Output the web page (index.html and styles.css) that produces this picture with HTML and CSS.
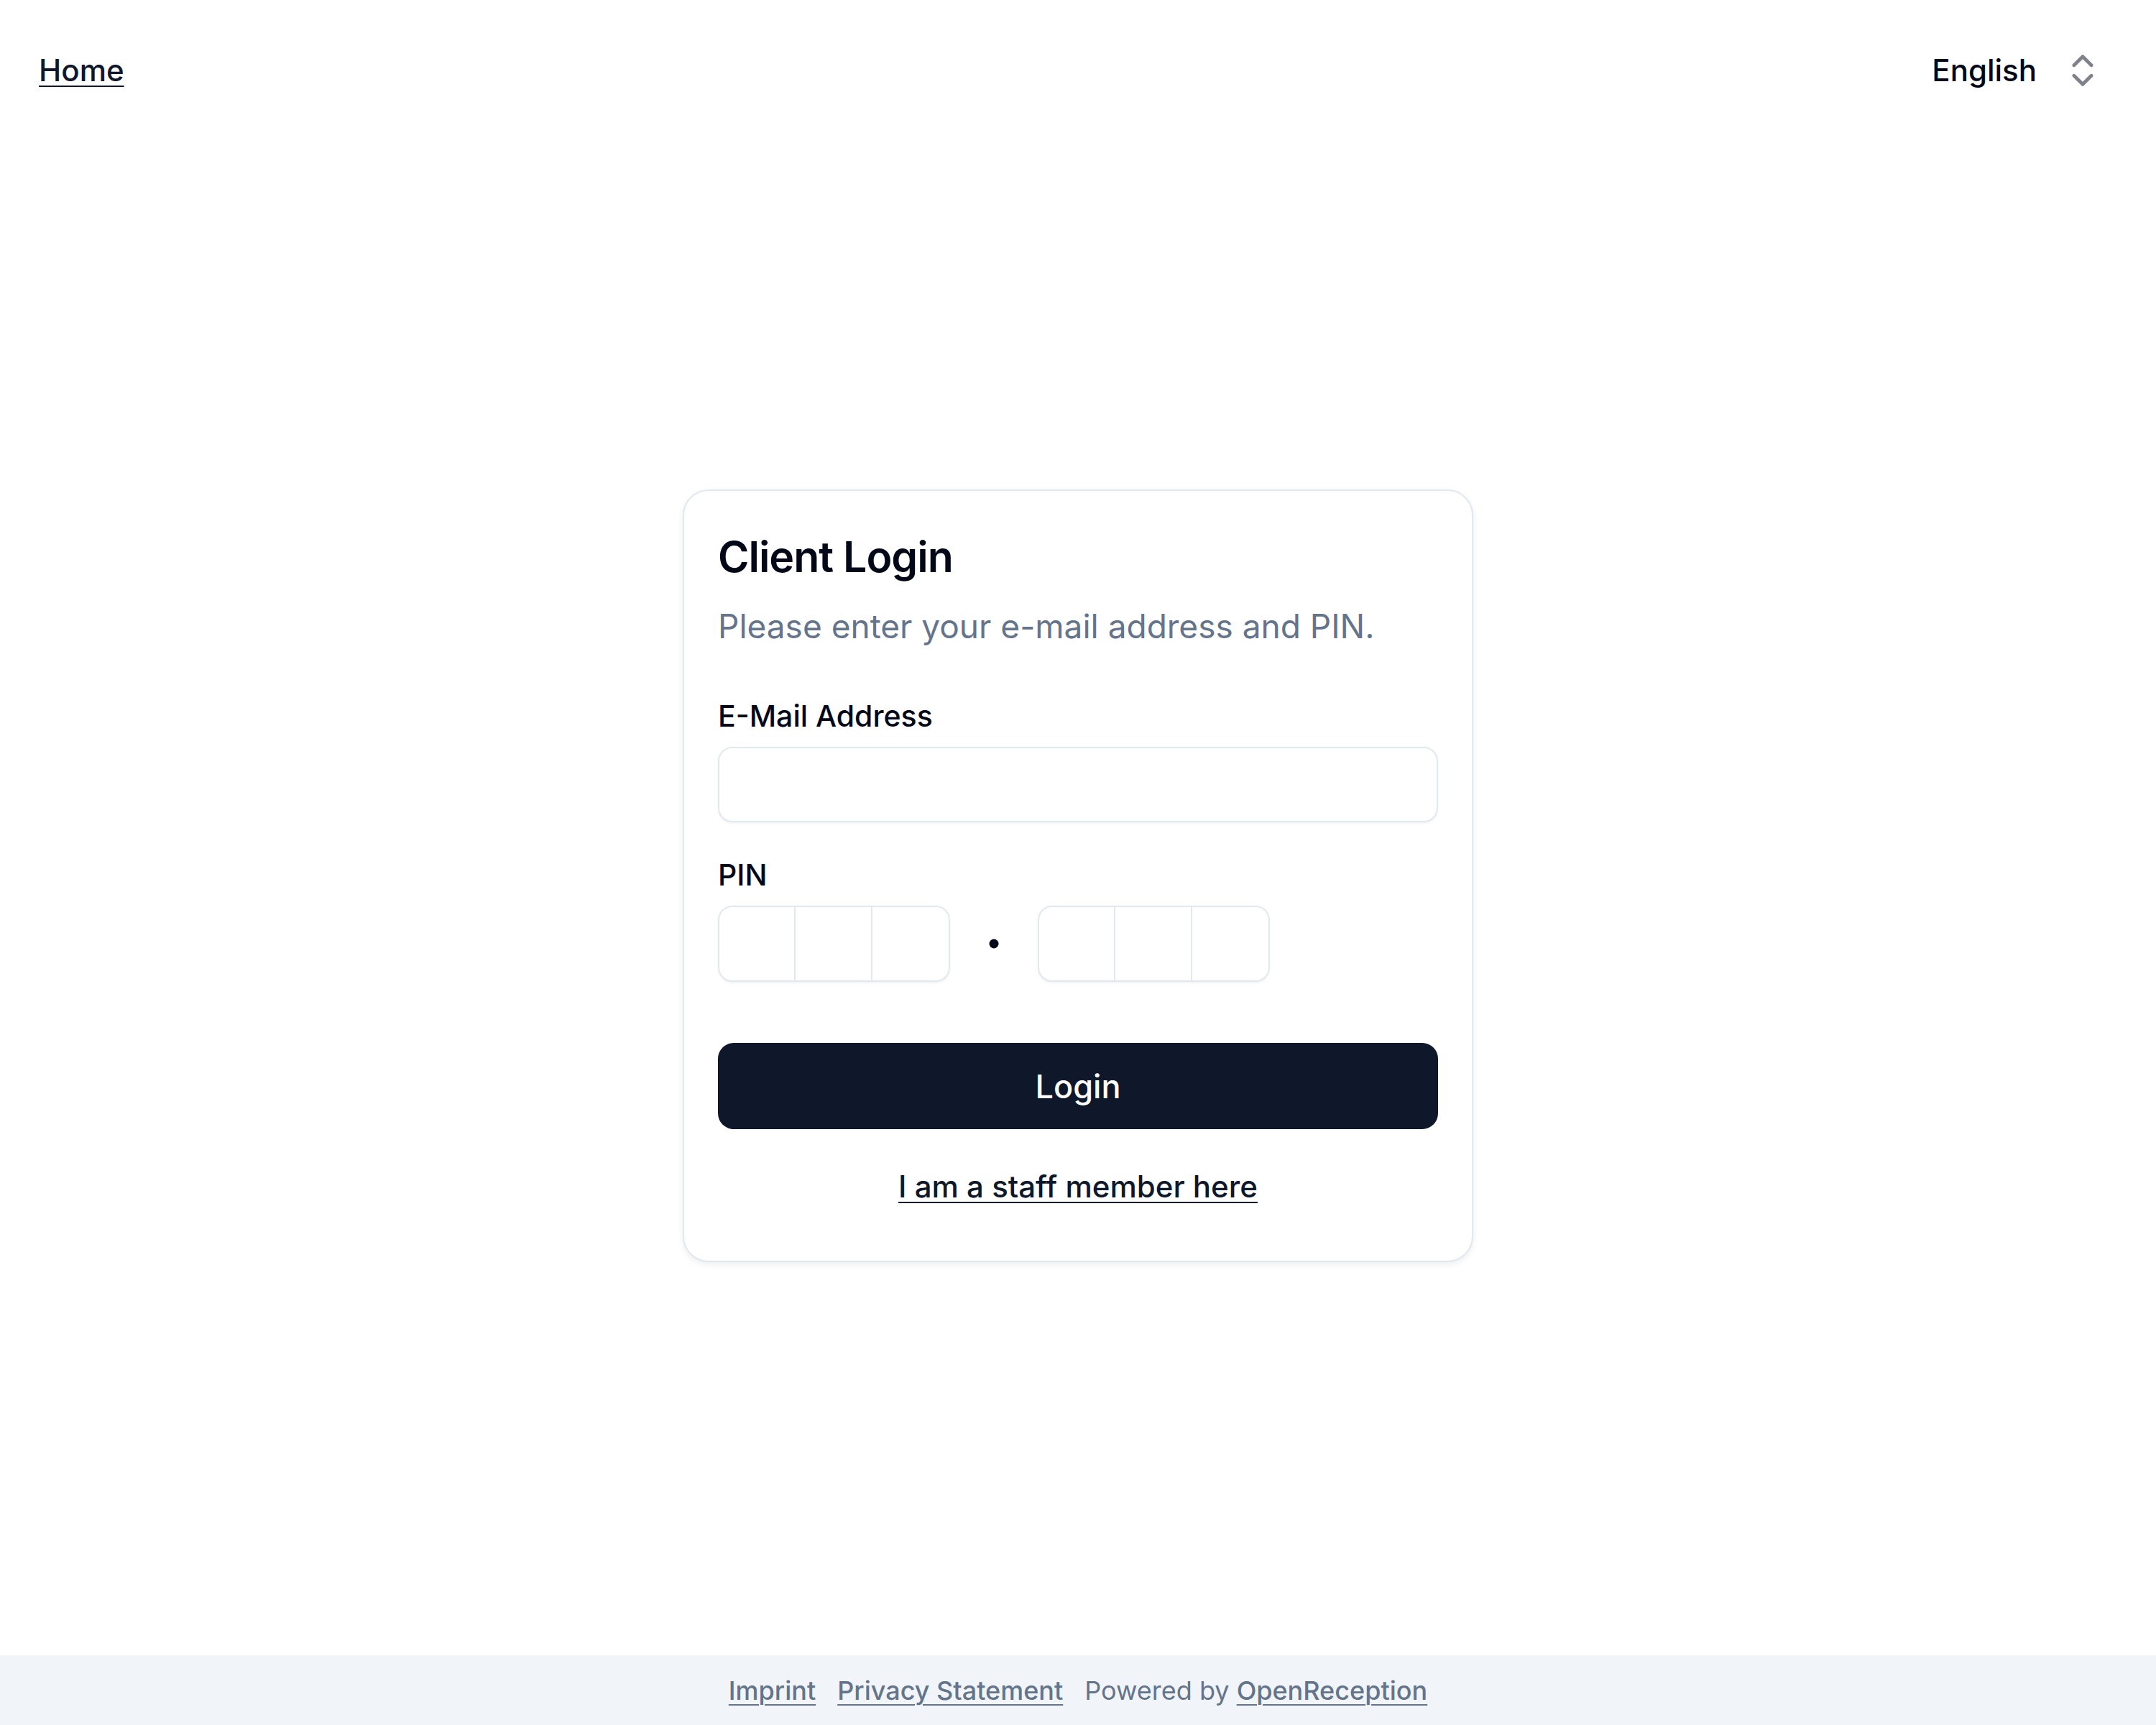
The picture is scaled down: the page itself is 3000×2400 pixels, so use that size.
FILE: index.html
```html
<!DOCTYPE html>
<html lang="en">
<head>
    <meta charset="UTF-8">
    <meta name="viewport" content="width=device-width, initial-scale=1.0">
    <title>Client Login</title>
    <link rel="stylesheet" href="styles.css">
</head>
<body>

<!-- Top bar -->
<header class="top-bar">
    <a href="#" class="home-link">Home</a>
    <div class="lang-select">
        <span>English</span>
        <svg class="lang-icon" viewBox="0 0 24 24" fill="none" stroke="currentColor" stroke-width="2" stroke-linecap="round" stroke-linejoin="round">
            <path d="m7 15 5 5 5-5"/>
            <path d="m7 9 5-5 5 5"/>
        </svg>
    </div>
</header>

<!-- Login card -->
<main class="main-area">
    <div class="login-card">
        <h1 class="card-title">Client Login</h1>
        <p class="card-subtitle">Please enter your e-mail address and PIN.</p>

        <form class="login-form">
            <div class="field">
                <label class="field-label" for="email">E-Mail Address</label>
                <input class="text-input" id="email" type="email">
            </div>

            <div class="field">
                <label class="field-label">PIN</label>
                <div class="pin-row">
                    <div class="pin-group">
                        <div class="pin-slot"></div>
                        <div class="pin-slot"></div>
                        <div class="pin-slot"></div>
                    </div>
                    <div class="pin-separator">
                        <svg viewBox="0 0 24 24"><circle cx="12" cy="12" r="6" fill="#020817"/></svg>
                    </div>
                    <div class="pin-group">
                        <div class="pin-slot"></div>
                        <div class="pin-slot"></div>
                        <div class="pin-slot"></div>
                    </div>
                </div>
            </div>

            <button type="button" class="login-button">Login</button>
        </form>

        <div class="staff-row">
            <a href="#" class="staff-link">I am a staff member here</a>
        </div>
    </div>
</main>

<!-- Footer -->
<footer class="page-footer">
    <a href="#">Imprint</a>
    <a href="#">Privacy Statement</a>
    <span>Powered by <a href="#">OpenReception</a></span>
</footer>

</body>
</html>
```

FILE: styles.css
```css
/* Page layout */
html, body {
    margin: 0;
    height: 100%;
}

body {
    display: flex;
    flex-direction: column;
    min-height: 100vh;
    font-family: Inter, "Liberation Sans", sans-serif;
    color: #020817;
    background-color: #ffffff;
}

/* Top bar */
.top-bar {
    display: flex;
    justify-content: space-between;
    align-items: center;
    padding: 56px 73px 0 54px;
    height: 84px;
}

.home-link {
    font-size: 42px;
    font-weight: 500;
    line-height: 84px;
    color: #0f172a;
    text-decoration: underline;
    text-decoration-thickness: 2px;
    text-underline-offset: 6px;
}

.lang-select {
    display: flex;
    align-items: center;
    gap: 35px;
    font-size: 42px;
    font-weight: 500;
    line-height: 84px;
}

.lang-icon {
    width: 58px;
    height: 58px;
    color: #020817;
    opacity: 0.5;
}

/* Main area with centered card */
.main-area {
    flex: 1;
    display: flex;
    justify-content: center;
    align-items: center;
    padding-bottom: 6px;
}

.login-card {
    width: 1100px;
    box-sizing: border-box;
    padding: 56px 47px 64px 47px;
    border: 2px solid #e2e8f0;
    border-radius: 36px;
    background-color: #ffffff;
    box-shadow: 0 3px 8px rgba(15, 23, 42, 0.08);
}

.card-title {
    margin: 0;
    font-size: 59px;
    font-weight: 600;
    line-height: 72px;
    letter-spacing: -1px;
}

.card-subtitle {
    margin: 28px 0 0 0;
    font-size: 46px;
    line-height: 64px;
    color: #64748b;
}

/* Form */
.login-form {
    margin-top: 65px;
    display: flex;
    flex-direction: column;
    gap: 45px;
}

.field {
    display: flex;
    flex-direction: column;
    gap: 15px;
}

.field-label {
    font-size: 41px;
    font-weight: 500;
    line-height: 56px;
}

.text-input {
    height: 105px;
    box-sizing: border-box;
    border: 2px solid #e2e8f0;
    border-radius: 20px;
    background-color: #ffffff;
    box-shadow: 0 2px 3px rgba(15, 23, 42, 0.05);
    font-family: inherit;
    font-size: 42px;
    padding: 0 30px;
    outline: none;
}

/* PIN slots */
.pin-row {
    display: flex;
    align-items: center;
    gap: 24px;
}

.pin-group {
    display: flex;
    border-radius: 20px;
    box-shadow: 0 2px 3px rgba(15, 23, 42, 0.05);
}

.pin-slot {
    width: 107.7px;
    height: 106px;
    box-sizing: border-box;
    border: 2px solid #e2e8f0;
    border-left: none;
    background-color: #ffffff;
}

.pin-slot:first-child {
    border-left: 2px solid #e2e8f0;
    border-radius: 20px 0 0 20px;
}

.pin-slot:last-child {
    border-radius: 0 20px 20px 0;
}

.pin-separator {
    width: 74px;
    height: 74px;
    display: flex;
    align-items: center;
    justify-content: center;
}

.pin-separator svg {
    width: 26px;
    height: 26px;
}

.login-button {
    margin-top: 40px;
    height: 120px;
    border: none;
    border-radius: 22px;
    background-color: #0f172a;
    color: #ffffff;
    font-family: inherit;
    font-size: 45px;
    font-weight: 500;
    cursor: pointer;
}

/* Staff link */
.staff-row {
    margin-top: 50px;
    text-align: center;
    line-height: 60px;
}

.staff-link {
    font-size: 42px;
    font-weight: 500;
    color: #0f172a;
    text-decoration: underline;
    text-decoration-thickness: 2px;
    text-underline-offset: 6px;
}

/* Footer */
.page-footer {
    height: 97px;
    display: flex;
    justify-content: center;
    align-items: center;
    gap: 30px;
    background-color: #f1f5f9;
    font-size: 36px;
    color: #64748b;
}

.page-footer a {
    color: #64748b;
    font-weight: 500;
    text-decoration: underline;
    text-decoration-thickness: 2px;
    text-underline-offset: 6px;
}
```
